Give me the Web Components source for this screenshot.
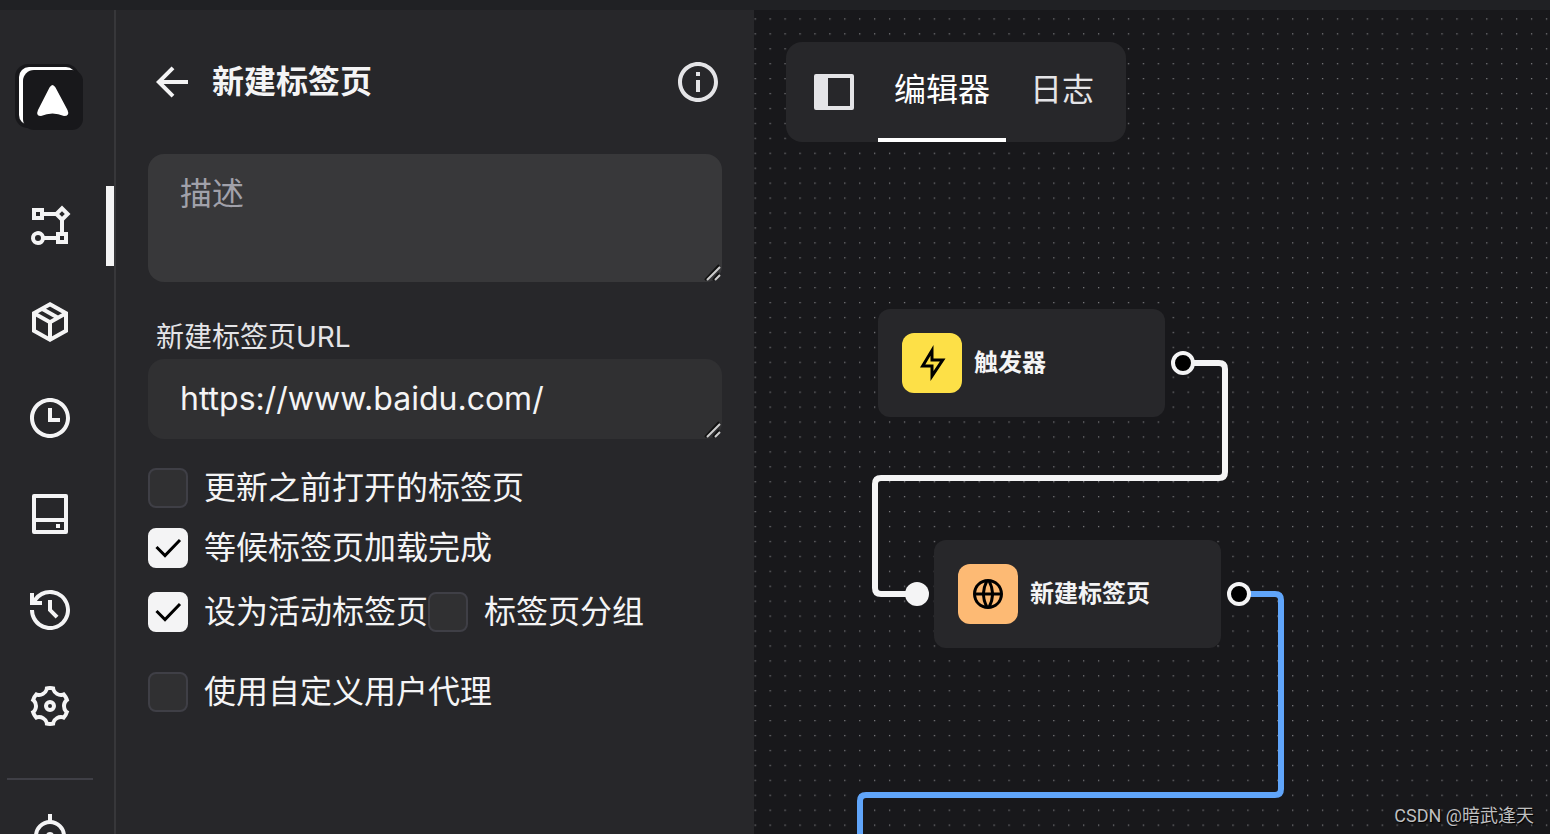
<!DOCTYPE html>
<html lang="zh-CN">
<head>
<meta charset="utf-8">
<title>新建标签页</title>
<style>
  html, body {
    height: 100%;
    margin: 0;
  }
  body {
    --panel: #27272a;
    --canvas: #18181b;
    --light: #f4f4f5;
    --muted: #e4e4e7;
    background: var(--canvas);
    color: var(--light);
    font-family: Inter, "Noto Sans CJK SC", sans-serif;
    font-size: 32px;
    line-height: 48px;
  }
</style>
</head>
<body>
<workflow-app></workflow-app>

<script>
const ICONS = {
  flow: '<path d="M6 21.5a3.5 3.5 0 1 1 3.355-4.5H15v-2h2V9.242L14.757 7H9v2H3V3h6v2h5.757L18 1.756 22.243 6 19 9.241V15h2v6h-6v-2H9.355A3.5 3.5 0 0 1 6 21.5zm0-5a1.5 1.5 0 1 0 0 3 1.5 1.5 0 0 0 0-3zM19 17h-2v2h2v-2zM18 4.586L16.586 6 18 7.414 19.414 6 18 4.586zM7 5H5v2h2V5z"/>',
  box: '<path d="M12 3.100l8 4.500v8.800l-8 4.500-8-4.500V7.600zM4 7.600l8 4.500 8-4.500M12 12.100v8.800M8 5.350l8 4.500" fill="none" stroke="currentColor" stroke-width="2"/>',
  clock: '<path d="M12 22C6.477 22 2 17.523 2 12S6.477 2 12 2s10 4.477 10 10-4.477 10-10 10zm0-2a8 8 0 1 0 0-16 8 8 0 0 0 0 16zm1-8h4v2h-6V7h2v5z"/>',
  storage: '<path d="M5 14h14V4H5v10zm0 2v4h14v-4H5zM4 2h16a1 1 0 0 1 1 1v18a1 1 0 0 1-1 1H4a1 1 0 0 1-1-1V3a1 1 0 0 1 1-1zm11 15h2v2h-2v-2z"/>',
  history: '<path d="M12 2c5.523 0 10 4.477 10 10s-4.477 10-10 10S2 17.523 2 12h2a8 8 0 1 0 1.385-4.500H8v2H2v-6h2V6a9.980 9.980 0 0 1 8-4zm1 5v4.585l3.243 3.243-1.415 1.415L11 12.413V7h2z"/>',
  settings: '<path d="M3.340 17a10.018 10.018 0 0 1-.978-2.326 3 3 0 0 0 .002-5.347A9.990 9.990 0 0 1 4.865 4.990a3 3 0 0 0 4.631-2.674 9.990 9.990 0 0 1 5.007.002 3 3 0 0 0 4.632 2.672c.579.590 1.093 1.261 1.525 2.010.433.749.757 1.526.978 2.326a3 3 0 0 0-.002 5.347 9.990 9.990 0 0 1-2.501 4.337 3 3 0 0 0-4.631 2.674 9.990 9.990 0 0 1-5.007-.002 3 3 0 0 0-4.632-2.672A10.018 10.018 0 0 1 3.340 17zm5.660.196a4.993 4.993 0 0 1 2.250 2.770c.499.047 1 .048 1.499.001A4.993 4.993 0 0 1 15 17.197a4.993 4.993 0 0 1 3.525-.565c.290-.408.540-.843.748-1.298A4.993 4.993 0 0 1 18 12c0-1.260.470-2.437 1.273-3.334a8.126 8.126 0 0 0-.750-1.298A4.993 4.993 0 0 1 15 6.804a4.993 4.993 0 0 1-2.250-2.770c-.499-.047-1-.048-1.499-.001A4.993 4.993 0 0 1 9 6.803a4.993 4.993 0 0 1-3.525.565 7.990 7.990 0 0 0-.748 1.298A4.993 4.993 0 0 1 6 12c0 1.260-.470 2.437-1.273 3.334a8.126 8.126 0 0 0 .750 1.298A4.993 4.993 0 0 1 9 17.196zM12 15a3 3 0 1 1 0-6 3 3 0 0 1 0 6zm0-2a1 1 0 1 0 0-2 1 1 0 0 0 0 2z"/>',
  locate: '<circle cx="12" cy="12" r="7" fill="none" stroke="currentColor" stroke-width="2"/><circle cx="12" cy="12" r="2"/><path d="M11 1h2v4h-2zM11 19h2v4h-2zM1 11h4v2H1zM19 11h4v2h-4z"/>',
  back: '<path d="M7.828 11H20v2H7.828l5.364 5.364-1.414 1.414L4 12l7.778-7.778 1.414 1.414z"/>',
  info: '<path d="M12 22C6.477 22 2 17.523 2 12S6.477 2 12 2s10 4.477 10 10-4.477 10-10 10zm0-2a8 8 0 1 0 0-16 8 8 0 0 0 0 16zM11 7h2v2h-2V7zm0 4h2v6h-2v-6z"/>',
  layout: '<path d="M3 3h18a1 1 0 0 1 1 1v16a1 1 0 0 1-1 1H3a1 1 0 0 1-1-1V4a1 1 0 0 1 1-1zm6 2v14h11V5H9z"/>',
  flash: '<path d="M13 9h8L11 24v-9H4l9-15v9zm-2 2V7.220L7.532 13H13v4.394L17.263 11H11z"/>',
  globe: '<path d="M12 22C6.477 22 2 17.523 2 12S6.477 2 12 2s10 4.477 10 10-4.477 10-10 10zm-2.290-2.333A17.900 17.900 0 0 1 8.027 13H4.062a8.008 8.008 0 0 0 5.648 6.667zM10.030 13c.151 2.439.848 4.730 1.970 6.752A15.905 15.905 0 0 0 13.970 13h-3.940zm9.908 0h-3.965a17.900 17.900 0 0 1-1.683 6.667A8.008 8.008 0 0 0 19.938 13zM4.062 11h3.965A17.900 17.900 0 0 1 9.710 4.333 8.008 8.008 0 0 0 4.062 11zm5.969 0h3.938A15.905 15.905 0 0 0 12 4.248 15.905 15.905 0 0 0 10.030 11zm4.259-6.667A17.900 17.900 0 0 1 15.973 11h3.965a8.008 8.008 0 0 0-5.648-6.667z"/>'
};

// Icon on a 24 unit grid, e.g. <ui-icon name="clock">
class UiIcon extends HTMLElement {
  constructor() {
    super();
    this.attachShadow({ mode: 'open' });
  }

  connectedCallback() {
    this.shadowRoot.innerHTML = `
      <style>
        :host { display: block; flex: none; width: var(--icon-size, 48px); height: var(--icon-size, 48px); }
        svg { display: block; width: 100%; height: 100%; fill: currentColor; }
      </style>
      <svg viewBox="0 0 24 24" aria-hidden="true">${ICONS[this.getAttribute('name')]}</svg>
      `;
  }
}

class NavButton extends HTMLElement {
  constructor() {
    super();
    this.attachShadow({ mode: 'open' });
    this.shadowRoot.innerHTML = `
      <style>
        :host { display: block; }
        button {
          display: flex;
          align-items: center;
          justify-content: center;
          box-sizing: border-box;
          width: 100%;
          height: 80px;
          padding: 0 6px 0 0;
          border: 0;
          border-right: 8px solid transparent;
          background: none;
          color: var(--light);
        }
        :host([active]) button { border-right-color: var(--light); }
      </style>
      <button type="button"><slot></slot></button>
      `;
  }

  connectedCallback() {
    this.shadowRoot.querySelector('button').setAttribute('aria-label', this.getAttribute('label'));
  }
}

class AppSidebar extends HTMLElement {
  constructor() {
    super();
    this.attachShadow({ mode: 'open' });
    this.shadowRoot.innerHTML = `
      <style>
        :host {
          display: flex;
          flex-direction: column;
          flex: none;
          box-sizing: border-box;
          width: 116px;
          overflow: hidden;
          background: var(--panel);
          border-right: 2px solid #37373a;
        }
        .logo { display: block; flex: none; width: 72px; height: 72px; margin: 52px 0 0 13px; }
        nav { display: flex; flex-direction: column; gap: 16px; margin-top: 52px; }
        hr { flex: none; width: 86px; height: 2px; margin: 32px 0 16px 7px; border: 0; background: #3f3f46; }
      </style>
      <svg class="logo" viewBox="0 0 72 72" aria-hidden="true">
        <rect x="2" y="2" width="64" height="64" rx="13" fill="#18181b"/>
        <rect x="6" y="5" width="57" height="58" rx="10" fill="#fff"/>
        <rect x="10" y="8" width="60" height="60" rx="11" fill="#18181b"/>
        <path d="M36.500 25.500Q39.500 20.500 42.500 25.500L54.500 48Q57 54 51 54Q39.500 49 28 54Q22.500 54 25 48z" fill="#fff"/>
      </svg>
      <nav>
        <nav-button label="工作流" active><ui-icon name="flow"></ui-icon></nav-button>
        <nav-button label="模块"><ui-icon name="box"></ui-icon></nav-button>
        <nav-button label="计划"><ui-icon name="clock"></ui-icon></nav-button>
        <nav-button label="存储"><ui-icon name="storage"></ui-icon></nav-button>
        <nav-button label="日志"><ui-icon name="history"></ui-icon></nav-button>
        <nav-button label="设置"><ui-icon name="settings"></ui-icon></nav-button>
      </nav>
      <hr>
      <nav-button label="选择器"><ui-icon name="locate"></ui-icon></nav-button>
      `;
  }
}

// Multi-line box with an optional label above it
class TextField extends HTMLElement {
  constructor() {
    super();
    this.attachShadow({ mode: 'open' });
    this.shadowRoot.innerHTML = `
      <style>
        :host { display: block; }
        label { display: block; padding-left: 8px; font-size: 28px; line-height: 44px; color: var(--muted); }
        label:empty { display: none; }
        .box { position: relative; }
        textarea {
          display: block;
          box-sizing: border-box;
          width: 100%;
          padding: 16px 32px;
          border: 0;
          border-radius: 16px;
          outline: 0;
          overflow: hidden;
          resize: none;
          background: var(--field, #303032);
          color: var(--light);
          font: inherit;
        }
        textarea::placeholder { color: #a1a1aa; opacity: 1; }
        .grip { position: absolute; right: 0; bottom: 0; width: 18px; height: 18px; }
      </style>
      <label for="input"></label>
      <div class="box">
        <textarea id="input" spellcheck="false"></textarea>
        <svg class="grip" viewBox="0 0 18 18" fill="none" aria-hidden="true">
          <path d="M1 16L15 1M9 16L15 9" stroke="#111" stroke-width="2"/>
          <path d="M3 16L16 3M11 16L16 11" stroke="#ccc" stroke-width="2"/>
        </svg>
      </div>
      `;
  }

  connectedCallback() {
    const input = this.shadowRoot.querySelector('textarea');
    this.shadowRoot.querySelector('label').textContent = this.getAttribute('label') || '';
    input.rows = this.getAttribute('rows') || 1;
    input.placeholder = this.getAttribute('placeholder') || '';
    input.value = this.getAttribute('value') || '';
    if (!this.hasAttribute('label'))
      input.setAttribute('aria-label', input.placeholder);
  }
}

class CheckOption extends HTMLElement {
  constructor() {
    super();
    this.attachShadow({ mode: 'open' });
    this.shadowRoot.innerHTML = `
      <style>
        :host { display: block; }
        label { display: flex; align-items: center; gap: 16px; height: 40px; white-space: nowrap; }
        .mark { display: grid; flex: none; width: 40px; height: 40px; }
        input, svg { grid-area: 1 / 1; }
        input {
          appearance: none;
          box-sizing: border-box;
          width: 40px;
          height: 40px;
          margin: 0;
          border: 2px solid #3f3f46;
          border-radius: 8px;
          background: #303032;
        }
        input:checked { border-color: var(--light); background: var(--light); }
        svg { width: 40px; height: 40px; visibility: hidden; pointer-events: none; }
        input:checked + svg { visibility: visible; }
      </style>
      <label>
        <span class="mark">
          <input type="checkbox">
          <svg viewBox="0 0 40 40" fill="none" stroke="#000" stroke-width="3" aria-hidden="true"><path d="M8.500 19l8.500 8.500 15-15.500"/></svg>
        </span>
        <slot></slot>
      </label>
      `;
  }

  connectedCallback() {
    this.shadowRoot.querySelector('input').checked = this.hasAttribute('checked');
  }
}

class EditPanel extends HTMLElement {
  constructor() {
    super();
    this.attachShadow({ mode: 'open' });
    this.shadowRoot.innerHTML = `
      <style>
        :host {
          display: block;
          flex: none;
          box-sizing: border-box;
          width: 638px;
          padding: 48px 32px;
          background: var(--panel);
        }
        header { display: flex; align-items: center; gap: 16px; margin-bottom: 48px; }
        h1 { flex: 1; margin: 0; font-size: 32px; line-height: 48px; font-weight: 700; }
        button { padding: 0; border: 0; background: none; color: inherit; }
        .info { color: var(--muted); }
        .desc { --field: #38383a; margin-bottom: 33px; }
        .options { display: flex; flex-direction: column; margin-top: 29px; }
        .row { display: flex; margin: 24px 0 40px; }
        .second { margin-top: 20px; }
      </style>
      <header>
        <button type="button" aria-label="返回"><ui-icon name="back"></ui-icon></button>
        <h1>新建标签页</h1>
        <button class="info" type="button" aria-label="帮助"><ui-icon name="info"></ui-icon></button>
      </header>
      <text-field class="desc" placeholder="描述" rows="2"></text-field>
      <text-field label="新建标签页URL" value="https://www.baidu.com/"></text-field>
      <div class="options">
        <check-option>更新之前打开的标签页</check-option>
        <check-option class="second" checked>等候标签页加载完成</check-option>
        <div class="row">
          <check-option checked>设为活动标签页</check-option>
          <check-option>标签页分组</check-option>
        </div>
        <check-option>使用自定义用户代理</check-option>
      </div>
      `;
  }
}

class EditorTabs extends HTMLElement {
  constructor() {
    super();
    this.attachShadow({ mode: 'open' });
    this.shadowRoot.innerHTML = `
      <style>
        :host {
          display: inline-flex;
          box-sizing: border-box;
          height: 100px;
          padding: 0 16px 0 24px;
          border-radius: 16px;
          background: var(--panel);
        }
        button {
          padding: 0 16px;
          border: 0;
          border-bottom: 4px solid transparent;
          background: none;
          color: var(--muted);
          font: inherit;
        }
        .toggle { padding: 4px 0 0; margin-right: 20px; }
        .tab { margin-right: 8px; }
        .tab:last-child { margin-right: 0; }
        .active { border-bottom-color: #fff; color: #fff; }
      </style>
      <button class="toggle" type="button" aria-label="切换侧栏"><ui-icon name="layout"></ui-icon></button>
      <button class="tab active" type="button">编辑器</button>
      <button class="tab" type="button">日志</button>
      `;
  }
}

class FlowNode extends HTMLElement {
  constructor() {
    super();
    this.attachShadow({ mode: 'open' });
    this.shadowRoot.innerHTML = `
      <style>
        :host {
          display: flex;
          align-items: center;
          gap: 12px;
          box-sizing: border-box;
          width: 287px;
          padding: 24px;
          border-radius: 12px;
          background: var(--panel);
          font-size: 24px;
          line-height: 36px;
          font-weight: 700;
        }
        .tile {
          --icon-size: 36px;
          display: grid;
          place-items: center;
          width: 60px;
          height: 60px;
          border-radius: 12px;
          background: var(--tile);
          color: #000;
        }
      </style>
      <div class="tile"><slot name="icon"></slot></div>
      <slot></slot>
      `;
  }
}

class FlowCanvas extends HTMLElement {
  constructor() {
    super();
    this.attachShadow({ mode: 'open' });
    this.shadowRoot.innerHTML = `
      <style>
        :host { display: block; position: relative; flex: 1; min-width: 0; overflow: hidden; background: var(--canvas); }
        .layer { position: absolute; left: 0; top: 0; width: 100%; height: 100%; }
        flow-node { position: absolute; }
        .trigger { --tile: #fde047; left: 124px; top: 299px; }
        .new-tab { --tile: #fdba74; left: 180px; top: 530px; }
        editor-tabs { position: absolute; left: 32px; top: 32px; }
        .credit {
          position: absolute;
          right: 16px;
          bottom: 4px;
          color: #bfbfc0;
          font-family: Roboto, "Noto Sans CJK SC", sans-serif;
          font-size: 18px;
          line-height: 28px;
          text-shadow: 1px 1px 1px #000;
        }
      </style>
      <svg class="layer" fill="none" aria-hidden="true">
        <defs>
          <pattern id="dots" width="20" height="20" patternUnits="userSpaceOnUse" patternTransform="translate(.6 8.300) scale(.7465)">
            <rect width="1.700" height="1.700" fill="#7c7c80"/>
          </pattern>
        </defs>
        <rect width="100%" height="100%" fill="url(#dots)"/>
      </svg>
      <flow-node class="trigger"><ui-icon slot="icon" name="flash"></ui-icon>触发器</flow-node>
      <flow-node class="new-tab"><ui-icon slot="icon" name="globe"></ui-icon>新建标签页</flow-node>
      <svg class="layer" fill="none" stroke-width="6" aria-hidden="true">
        <path d="M429 353h36q6 0 6 6v103q0 6-6 6H127q-6 0-6 6v104q0 6 6 6h36" stroke="#f4f4f5"/>
        <path d="M485 584h36q6 0 6 6v189q0 6-6 6H112q-6 0-6 6v900" stroke="#60a5fa"/>
        <circle cx="163" cy="584" r="12" fill="#f4f4f5"/>
        <g fill="#000" stroke="#f4f4f5" stroke-width="4">
          <circle cx="429" cy="353" r="10"/>
          <circle cx="485" cy="584" r="10"/>
        </g>
      </svg>
      <editor-tabs></editor-tabs>
      <div class="credit">CSDN @暗武逢天</div>
      `;
  }
}

class WorkflowApp extends HTMLElement {
  constructor() {
    super();
    this.attachShadow({ mode: 'open' });
    this.shadowRoot.innerHTML = `
      <style>
        :host {
          display: flex;
          box-sizing: border-box;
          height: 100vh;
          overflow: hidden;
          border-top: 10px solid #202124;
        }
      </style>
      <app-sidebar></app-sidebar>
      <edit-panel></edit-panel>
      <flow-canvas></flow-canvas>
      `;
  }
}

customElements.define('ui-icon', UiIcon);
customElements.define('nav-button', NavButton);
customElements.define('app-sidebar', AppSidebar);
customElements.define('text-field', TextField);
customElements.define('check-option', CheckOption);
customElements.define('edit-panel', EditPanel);
customElements.define('editor-tabs', EditorTabs);
customElements.define('flow-node', FlowNode);
customElements.define('flow-canvas', FlowCanvas);
customElements.define('workflow-app', WorkflowApp);
</script>
</body>
</html>
